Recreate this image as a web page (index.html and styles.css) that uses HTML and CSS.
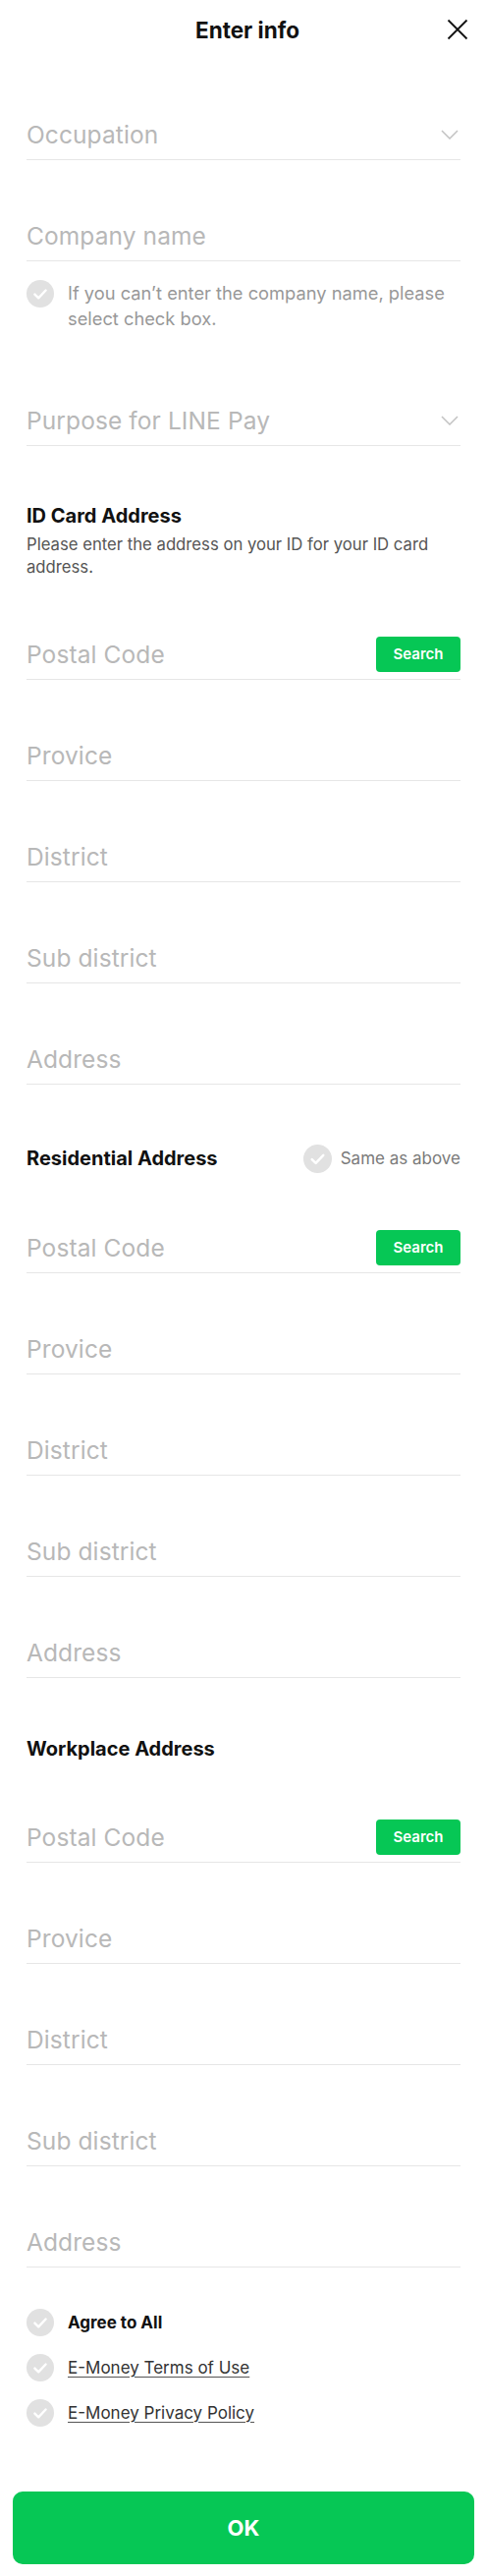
FILE: index.html
```html
<!DOCTYPE html>
<html lang="en">
<head>
  <meta charset="UTF-8">
  <meta name="viewport" content="width=device-width, initial-scale=1.0">
  <title>Enter info</title>
  <link rel="stylesheet" href="styles.css">
</head>
<body>

  <header class="topbar">
    <span></span>
    <h1 class="title">Enter info</h1>
    <button class="close" aria-label="Close">
      <svg width="22" height="22" viewBox="0 0 22 22"><path d="M1.5 1.5l19 19M20.5 1.5l-19 19" stroke="#111" stroke-width="1.8" fill="none"/></svg>
    </button>
  </header>

  <main class="form">
    <div class="field first">
      <span class="placeholder">Occupation</span>
      <svg class="chevron" width="18" height="10" viewBox="0 0 18 10"><path d="M1 1l8 8 8-8" stroke="#c2c2c2" stroke-width="1.5" fill="none"/></svg>
    </div>

    <div class="field">
      <span class="placeholder">Company name</span>
    </div>

    <div class="check-row note">
      <svg class="check" width="28" height="28" viewBox="0 0 28 28"><circle cx="14" cy="14" r="14" fill="#e1e1e1"/><path d="M8.4 14.6l3.8 3.7 7.4-7.8" stroke="#fff" stroke-width="2.4" fill="none" stroke-linecap="round" stroke-linejoin="round"/></svg>
      <p>If you can’t enter the company name, please select check box.</p>
    </div>

    <div class="field purpose">
      <span class="placeholder">Purpose for LINE Pay</span>
      <svg class="chevron" width="18" height="10" viewBox="0 0 18 10"><path d="M1 1l8 8 8-8" stroke="#c2c2c2" stroke-width="1.5" fill="none"/></svg>
    </div>

    <!-- ID card address -->
    <h2 class="section-title id-card">ID Card Address</h2>
    <p class="section-desc">Please enter the address on your ID for your ID card address.</p>

    <div class="field">
      <span class="placeholder">Postal Code</span>
      <button class="search">Search</button>
    </div>
    <div class="field"><span class="placeholder">Provice</span></div>
    <div class="field"><span class="placeholder">District</span></div>
    <div class="field"><span class="placeholder">Sub district</span></div>
    <div class="field"><span class="placeholder">Address</span></div>

    <!-- Residential address -->
    <div class="section-head">
      <h2 class="section-title">Residential Address</h2>
      <label class="same">
        <svg class="check" width="29" height="29" viewBox="0 0 28 28"><circle cx="14" cy="14" r="14" fill="#e1e1e1"/><path d="M8.4 14.6l3.8 3.7 7.4-7.8" stroke="#fff" stroke-width="2.4" fill="none" stroke-linecap="round" stroke-linejoin="round"/></svg>
        Same as above
      </label>
    </div>

    <div class="field">
      <span class="placeholder">Postal Code</span>
      <button class="search">Search</button>
    </div>
    <div class="field"><span class="placeholder">Provice</span></div>
    <div class="field"><span class="placeholder">District</span></div>
    <div class="field"><span class="placeholder">Sub district</span></div>
    <div class="field"><span class="placeholder">Address</span></div>

    <!-- Workplace address -->
    <h2 class="section-title workplace">Workplace Address</h2>

    <div class="field">
      <span class="placeholder">Postal Code</span>
      <button class="search">Search</button>
    </div>
    <div class="field"><span class="placeholder">Provice</span></div>
    <div class="field"><span class="placeholder">District</span></div>
    <div class="field"><span class="placeholder">Sub district</span></div>
    <div class="field"><span class="placeholder">Address</span></div>

    <ul class="agree-list">
      <li class="check-row">
        <svg class="check" width="28" height="28" viewBox="0 0 28 28"><circle cx="14" cy="14" r="14" fill="#e1e1e1"/><path d="M8.4 14.6l3.8 3.7 7.4-7.8" stroke="#fff" stroke-width="2.4" fill="none" stroke-linecap="round" stroke-linejoin="round"/></svg>
        <strong>Agree to All</strong>
      </li>
      <li class="check-row">
        <svg class="check" width="28" height="28" viewBox="0 0 28 28"><circle cx="14" cy="14" r="14" fill="#e1e1e1"/><path d="M8.4 14.6l3.8 3.7 7.4-7.8" stroke="#fff" stroke-width="2.4" fill="none" stroke-linecap="round" stroke-linejoin="round"/></svg>
        <a href="#">E-Money Terms of Use</a>
      </li>
      <li class="check-row">
        <svg class="check" width="28" height="28" viewBox="0 0 28 28"><circle cx="14" cy="14" r="14" fill="#e1e1e1"/><path d="M8.4 14.6l3.8 3.7 7.4-7.8" stroke="#fff" stroke-width="2.4" fill="none" stroke-linecap="round" stroke-linejoin="round"/></svg>
        <a href="#">E-Money Privacy Policy</a>
      </li>
    </ul>
  </main>

  <footer class="bottom">
    <button class="ok">OK</button>
  </footer>

</body>
</html>
```

FILE: styles.css
```css
body {
  font-family: Inter, "Noto Sans", sans-serif;
  background-color: #ffffff;
  color: #111;
  margin: 0;
  padding: 0;
}
.topbar {
  display: grid;
  grid-template-columns: 1fr auto 1fr;
  align-items: center;
  height: 60px;
  padding: 0 19px 0 27px;
}
.title {
  margin: 0;
  font-size: 22.5px;
  font-weight: 700;
}
.close {
  justify-self: end;
  display: flex;
  padding: 0;
  border: none;
  background: none;
}
.form {
  padding: 0 27px;
}
.field {
  display: flex;
  align-items: center;
  height: 51px;
  margin-top: 51px;
  border-bottom: 1px solid #e6e6e6;
}
.field.purpose {
  margin-top: 65px;
}
.placeholder {
  flex: 1;
  font-size: 24.5px;
  color: #b8b8b8;
  letter-spacing: 0.1px;
}
.chevron {
  margin-right: 2px;
}
.search {
  width: 86px;
  height: 36px;
  border: none;
  border-radius: 4px;
  background-color: #06c755;
  color: #fff;
  font-family: inherit;
  font-size: 15px;
  font-weight: 600;
}
.check-row {
  display: flex;
  align-items: center;
  gap: 14px;
}
.check {
  flex-shrink: 0;
}
.note {
  align-items: flex-start;
  margin-top: 19px;
}
.note p {
  margin: 0;
  font-size: 18.3px;
  line-height: 26px;
  color: #989898;
}
.section-title {
  margin: 0;
  font-size: 20px;
  font-weight: 700;
  line-height: 26px;
}
.section-title.id-card {
  margin-top: 58px;
}
.section-title.workplace {
  margin-top: 59px;
}
.section-desc {
  margin: 5px 0 0;
  font-size: 16.7px;
  line-height: 23px;
  color: #555;
}
.section-head {
  display: flex;
  align-items: center;
  justify-content: space-between;
  height: 30px;
  margin-top: 60px;
}
.section-head + .field {
  margin-top: 50px;
}
.same {
  display: flex;
  align-items: center;
  gap: 9px;
  font-size: 17px;
  color: #7a7a7a;
}
.agree-list {
  list-style: none;
  margin: 42px 0 0;
  padding: 0;
  display: flex;
  flex-direction: column;
  gap: 18px;
}
.agree-list strong {
  font-size: 17px;
  font-weight: 700;
}
.agree-list a {
  font-size: 17px;
  color: #333;
  text-decoration: underline;
  text-underline-offset: 3px;
  text-decoration-color: #555;
}
.bottom {
  padding: 66px 13px 14px;
}
.ok {
  display: block;
  width: 100%;
  height: 74px;
  border: none;
  border-radius: 10px;
  background-color: #06c755;
  color: #fff;
  font-family: inherit;
  font-size: 22px;
  font-weight: 700;
}
```
